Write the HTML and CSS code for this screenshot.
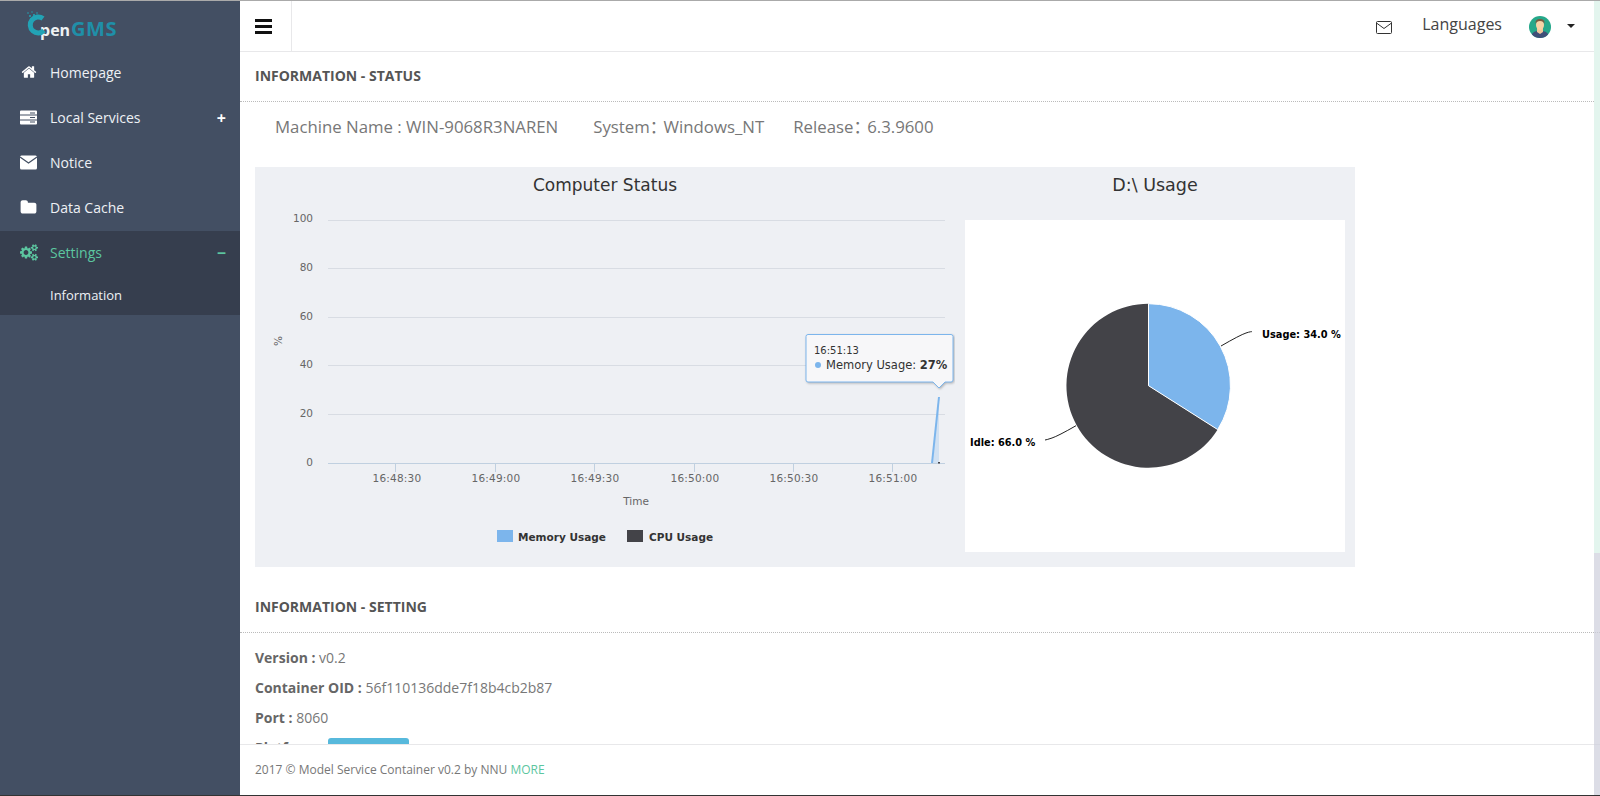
FILE: index.html
```html
<!DOCTYPE html>
<html lang="en">
<head>
  <meta charset="UTF-8">
  <title>OpenGMS - Information</title>
  <link rel="stylesheet" href="styles.css">
</head>
<body>
  <aside class="sidebar">
    <div class="logo">
      <svg class="logo-o" viewBox="0 0 26 30" width="26" height="30">
        <path d="M17 8.500A8 8 0 1 0 18 20.500" fill="none" stroke="#22a3b5" stroke-width="5"/>
        <circle cx="2" cy="3" r=".8" fill="#22a3b5"/>
        <circle cx="6" cy="2" r=".7" fill="#22a3b5"/>
        <circle cx="4" cy="6" r="1" fill="#22a3b5"/>
        <circle cx="8" cy="5" r="1.100" fill="#22a3b5"/>
        <circle cx="11" cy="3" r=".8" fill="#22a3b5"/>
      </svg>
      <span class="logo-pen">pen</span><span class="logo-gms">GMS</span>
    </div>
    <nav class="menu">
      <a class="menu-item">
        <svg class="menu-icon icon-home" viewBox="0 0 1664 1792"><path d="M1408 992v480q0 26-19 45t-45 19h-384v-384h-256v384h-384q-26 0-45-19t-19-45v-480q0-1 .5-3t.5-3l575-474 575 474q1 2 1 6zm223-69l-62 74q-8 9-21 11h-3q-13 0-21-7l-692-577-692 577q-12 8-24 7-13-2-21-11l-62-74q-8-10-7-23.500t11-21.500l719-599q32-26 76-26t76 26l244 204v-195q0-14 9-23t23-9h192q14 0 23 9t9 23v408l219 182q10 8 11 21.500t-7 23.500z"/></svg>
        Homepage
      </a>
      <a class="menu-item">
        <svg class="menu-icon" viewBox="0 0 17 14">
          <path d="M0 1q0-1 1-1h15q1 0 1 1v3H0zM0 5h17v4H0zM0 10h17v3q0 1-1 1H1q-1 0-1-1z"/>
          <path class="slot" d="M10 2h5v1h-5zM10 6.500h5v1h-5zM10 11h5v1h-5z"/>
        </svg>
        Local Services
        <span class="menu-toggle">+</span>
      </a>
      <a class="menu-item">
        <svg class="menu-icon" viewBox="0 0 17 14">
          <rect width="17" height="14" rx="1.500"/>
          <path class="groove" d="M0 1.500l8.500 6 8.500-6"/>
        </svg>
        Notice
      </a>
      <a class="menu-item">
        <svg class="menu-icon" viewBox="0 0 1664 1792"><path d="M1664 608v704q0 92-66 158t-158 66h-1216q-92 0-158-66t-66-158v-960q0-92 66-158t158-66h320q92 0 158 66t66 158v32h672q92 0 158 66t66 158z"/></svg>
        Data Cache
      </a>
      <div class="menu-group">
        <a class="menu-item active">
          <svg class="menu-icon" viewBox="0 0 1920 1792"><path d="M896 896q0-106-75-181t-181-75-181 75-75 181 75 181 181 75 181-75 75-181zm768 512q0-52-38-90t-90-38-90 38-38 90q0 53 37.500 90.500t90.500 37.500 90.500-37.500 37.500-90.500zm0-1024q0-52-38-90t-90-38-90 38-38 90q0 53 37.500 90.500t90.500 37.500 90.500-37.500 37.500-90.500zm-384 421v185q0 10-7 19.500t-16 10.500l-155 24q-11 35-32 76 34 48 90 115 7 11 7 20 0 12-7 19-23 30-82.500 89.500t-78.500 59.500q-11 0-21-7l-115-90q-37 19-77 31-11 108-23 155-7 24-30 24h-186q-11 0-20-7.500t-10-17.500l-23-153q-34-10-75-31l-118 89q-7 7-20 7-11 0-21-8-144-133-144-160 0-9 7-19 10-14 41-53t47-61q-23-44-35-82l-152-24q-10-1-17-9.500t-7-19.500v-185q0-10 7-19.500t16-10.500l155-24q11-35 32-76-34-48-90-115-7-11-7-20 0-12 7-20 22-30 82-89t79-59q11 0 21 7l115 90q34-18 77-32 11-108 23-154 7-24 30-24h186q11 0 20 7.500t10 17.500l23 153q34 10 75 31l118-89q8-7 20-7 11 0 21 8 144 133 144 160 0 8-7 19-12 16-42 54t-45 60q23 48 34 82l152 23q10 2 17 10.500t7 19.500zm640 533v140q0 16-149 31-12 27-30 52 51 113 51 138 0 4-4 7-122 71-124 71-8 0-46-47t-52-68q-20 2-30 2t-30-2q-14 21-52 68t-46 47q-2 0-124-71-4-3-4-7 0-25 51-138-18-25-30-52-149-15-149-31v-140q0-16 149-31 13-29 30-52-51-113-51-138 0-4 4-7 4-2 35-20t59-34 30-16q8 0 46 46.500t52 67.500q20-2 30-2t30 2q51-71 92-112l6-2q4 0 124 70 4 3 4 7 0 25-51 138 17 23 30 52 149 15 149 31zm0-1024v140q0 16-149 31-12 27-30 52 51 113 51 138 0 4-4 7-122 71-124 71-8 0-46-47t-52-68q-20 2-30 2t-30-2q-14 21-52 68t-46 47q-2 0-124-71-4-3-4-7 0-25 51-138-18-25-30-52-149-15-149-31v-140q0-16 149-31 13-29 30-52-51-113-51-138 0-4 4-7 4-2 35-20t59-34 30-16q8 0 46 46.500t52 67.500q20-2 30-2t30 2q51-71 92-112l6-2q4 0 124 70 4 3 4 7 0 25-51 138 17 23 30 52 149 15 149 31z"/></svg>
          Settings
          <span class="menu-toggle">−</span>
        </a>
        <a class="submenu-item">Information</a>
      </div>
    </nav>
  </aside>

  <div class="main">
    <header class="topbar">
      <div class="burger"><span></span><span></span><span></span></div>
      <div class="topbar-right">
        <svg class="top-mail" viewBox="0 0 16 13" width="16" height="13">
          <rect x=".5" y=".5" width="15" height="12" rx="1"/>
          <path d="M.5 2l7.500 5.500L15.500 2"/>
        </svg>
        <span class="languages">Languages</span>
        <svg class="avatar" viewBox="0 0 22 22" width="22" height="22">
          <clipPath id="avatarClip"><circle cx="11" cy="11" r="11"/></clipPath>
          <g clip-path="url(#avatarClip)">
            <rect width="22" height="22" fill="#25a88a"/>
            <path d="M2 22q0-6 6-7h6q6 1 6 7z" fill="#3f4f78"/>
            <path d="M8 12h6v4l-3 2-3-2z" fill="#f1c89a"/>
            <ellipse cx="11" cy="9" rx="4" ry="5" fill="#f6d2a6"/>
            <path d="M6.500 8q-.5-5 4.500-5t4.500 5q-1-3-4.500-3t-4.500 3z" fill="#7a5a40"/>
          </g>
        </svg>
        <span class="caret"></span>
      </div>
    </header>

    <main class="content">
      <h3 class="section-title">INFORMATION - STATUS</h3>
      <div class="machine">
        <span>Machine Name : WIN-9068R3NAREN</span>
        <span class="machine-system">System<span class="colon">：</span>Windows_NT</span>
        <span class="machine-release">Release<span class="colon">：</span>6.3.9600</span>
      </div>

      <div class="charts">
        <svg class="line-chart" viewBox="255 167 700 400" width="700" height="400">
          <text class="chart-title" x="605" y="191">Computer Status</text>

          <g class="grid">
            <path d="M328 220.500H945M328 268.500H945M328 317.500H945M328 365.500H945M328 414.500H945"/>
          </g>
          <path class="baseline" d="M328 463.500H945M395.500 463V472M495.500 463V472M594.500 463V472M694.500 463V472M793.500 463V472M892.500 463V472"/>

          <g class="y-labels">
            <text x="313" y="222">100</text>
            <text x="313" y="271">80</text>
            <text x="313" y="320">60</text>
            <text x="313" y="368">40</text>
            <text x="313" y="417">20</text>
            <text x="313" y="466">0</text>
          </g>
          <text class="axis-name" transform="translate(282 341) rotate(-90)">%</text>

          <g class="x-labels">
            <text x="397" y="482">16:48:30</text>
            <text x="496" y="482">16:49:00</text>
            <text x="595" y="482">16:49:30</text>
            <text x="695" y="482">16:50:00</text>
            <text x="794" y="482">16:50:30</text>
            <text x="893" y="482">16:51:00</text>
          </g>
          <text class="axis-name" x="636" y="505">Time</text>

          <path class="series-area" d="M932 463L939 397V463z"/>
          <path class="series-line" d="M932 463L939 397"/>
          <rect x="938" y="462" width="2" height="1.500" fill="#444349"/>

          <rect class="swatch-memory" x="497" y="530" width="16" height="12"/>
          <text class="legend" x="518" y="541">Memory Usage</text>
          <rect class="swatch-cpu" x="627" y="530" width="16" height="12"/>
          <text class="legend" x="649" y="541">CPU Usage</text>

          <path class="tip-box" d="M808 334.500H951a2 2 0 0 1 2 2V380a2 2 0 0 1-2 2H945L939 388L933 382H808a2 2 0 0 1-2-2V336.500a2 2 0 0 1 2-2z"/>
          <text class="tip-time" x="814" y="354">16:51:13</text>
          <circle cx="818" cy="365" r="3" fill="#7cb5ec"/>
          <text class="tip-text" x="826" y="369">Memory Usage: <tspan class="tip-value">27%</tspan></text>
        </svg>

        <div class="pie-col">
          <div class="pie-title">D:\ Usage</div>
          <svg class="pie-chart" viewBox="965 220 380 332" width="380" height="332">
            <path class="slice-idle" d="M1148.500 385.700L1217.700 429.600A82 82 0 1 1 1148.500 303.700z"/>
            <path class="slice-usage" d="M1148.500 385.700V303.700A82 82 0 0 1 1217.700 429.600z"/>
            <path class="leader" d="M1221 346Q1240 335 1246 333T1252 332"/>
            <path class="leader" d="M1076 425.700Q1058 436 1052 438T1045 440"/>
            <text class="pie-label" x="1262" y="338">Usage: 34.0 %</text>
            <text class="pie-label" x="970" y="446">Idle: 66.0 %</text>
          </svg>
        </div>
      </div>

      <h3 class="section-title setting-title">INFORMATION - SETTING</h3>
      <div class="settings">
        <div class="setting-row"><b>Version :</b> v0.2</div>
        <div class="setting-row"><b>Container OID :</b> 56f110136dde7f18b4cb2b87</div>
        <div class="setting-row"><b>Port :</b> 8060</div>
        <div class="setting-row"><b>Platform :</b> <span class="badge">Windows</span></div>
      </div>
    </main>

    <footer class="footer">2017 © Model Service Container v0.2 by NNU <a class="more">MORE</a></footer>
  </div>

  <div class="scrollbar"><div class="scroll-thumb"></div></div>
</body>
</html>
```

FILE: styles.css
```css
* {
  box-sizing: border-box;
}
html, body {
  margin: 0;
  height: 796px;
  overflow: hidden;
}
body {
  display: flex;
  position: relative;
  font-family: "Open Sans", "Noto Sans CJK SC", sans-serif;
  font-size: 14px;
  color: #777;
  background: white;
  border-top: 1px solid #aaa;
  border-bottom: 1px solid #333;
}

/* sidebar */
.sidebar {
  width: 240px;
  flex-shrink: 0;
  background: #434f63;
}
.logo {
  height: 50px;
  display: flex;
  align-items: baseline;
  position: relative;
  padding: 18px 0 0 40px;
  line-height: 1;
}
.logo-o {
  position: absolute;
  left: 26px;
  top: 9px;
}
.logo-pen {
  color: #eef2f4;
  font-size: 16px;
  font-weight: 700;
}
.logo-gms {
  margin-left: 1px;
  color: #1f8fa8;
  font-size: 20px;
  font-weight: 700;
  letter-spacing: .5px;
}
.menu-item {
  height: 45px;
  display: flex;
  align-items: center;
  padding: 0 14px 2px 50px;
  position: relative;
  color: #eef1f5;
  font-size: 14px;
}
.menu-icon {
  position: absolute;
  left: 20px;
  top: 13px;
  width: 17px;
  height: 17px;
  fill: #fff;
}
.icon-home {
  left: 21px;
  width: 16px;
  height: 16px;
}
.menu-icon .slot {
  fill: #434f63;
}
.menu-icon .groove {
  fill: none;
  stroke: #434f63;
  stroke-width: 1.300;
}
.menu-toggle {
  margin-left: auto;
  font-size: 16px;
  font-weight: 700;
  color: #fff;
}
.menu-group {
  background: #363e4e;
  height: 84px;
}
.menu-item.active,
.menu-item.active .menu-toggle {
  color: #5cc6a0;
}
.menu-item.active .menu-icon {
  fill: #5cc6a0;
  width: 18px;
}
.submenu-item {
  display: block;
  padding: 6px 0 0 50px;
  line-height: 27px;
  font-size: 13px;
  color: #eef1f5;
}

/* top bar */
.main {
  flex: 1;
  min-width: 0;
  display: flex;
  flex-direction: column;
}
.topbar {
  height: 51px;
  flex-shrink: 0;
  display: flex;
  justify-content: space-between;
  border-bottom: 1px solid #e8e8ea;
}
.burger {
  width: 52px;
  border-right: 1px solid #e8e8ea;
  padding: 18px 0 0 15px;
}
.burger span {
  display: block;
  width: 17px;
  height: 3px;
  margin-bottom: 3px;
  background: #111;
}
.topbar-right {
  display: flex;
  align-items: center;
  padding-right: 25px;
}
.top-mail {
  fill: none;
  stroke: #333;
  stroke-width: 1;
  margin: 2px 30px 0 0;
}
.languages {
  font-size: 16px;
  color: #444;
  margin: -4px 27px 0 0;
}
.avatar {
  margin: 1px 16px 0 0;
}
.caret {
  border: 4px solid transparent;
  border-top-color: #222;
  border-bottom: 0;
}

/* content */
.content {
  flex: 1;
  min-height: 0;
  overflow: hidden;
}
.section-title {
  margin: 0;
  height: 50px;
  line-height: 47px;
  padding-left: 15px;
  font-size: 14px;
  font-weight: 700;
  color: #555;
  border-bottom: 1px dotted #bbb;
}
.setting-title {
  height: 51px;
  margin-top: 15px;
  line-height: 49px;
}
.machine {
  height: 50px;
  display: flex;
  align-items: center;
  padding: 0 0 2px 35px;
  font-size: 16.800px;
  color: #777;
}
.machine-system {
  margin-left: 35px;
}
.machine-release {
  margin-left: 29px;
}
.colon {
  margin-right: -3px;
}
.charts {
  margin: 15px 0 0 15px;
  width: 1100px;
  height: 400px;
  display: flex;
  background: #eef0f4;
}
.chart-title, .pie-title {
  font-family: "DejaVu Sans", sans-serif;
  font-size: 17.500px;
  fill: #333;
  color: #333;
}
.chart-title {
  font-size: 17px;
  text-anchor: middle;
}
.line-chart {
  flex-shrink: 0;
  width: 700px;
}
.grid {
  stroke: #d8dce3;
  stroke-width: 1;
}
.baseline {
  fill: none;
  stroke: #c0d0e0;
  stroke-width: 1;
}
.y-labels text, .x-labels text, .axis-name, .tip-time, .tip-text {
  font-family: "DejaVu Sans", sans-serif;
  font-size: 10.500px;
  fill: #666;
}
.x-labels text {
  letter-spacing: .2px;
}
.y-labels text {
  text-anchor: end;
}
.x-labels text, .axis-name {
  text-anchor: middle;
}
.series-area {
  fill: #7cb5ec;
  opacity: .25;
}
.series-line {
  fill: none;
  stroke: #7cb5ec;
  stroke-width: 2;
}
.swatch-memory {
  fill: #7cb5ec;
}
.swatch-cpu {
  fill: #434348;
}
.legend {
  font-family: "DejaVu Sans", sans-serif;
  font-size: 10.500px;
  font-weight: 700;
  fill: #333;
}
.tip-box {
  fill: #f7f7f9;
  stroke: #7cb5ec;
  stroke-width: 1;
  filter: drop-shadow(1px 1px 1px rgba(0,0,0,.25));
}
.tip-time {
  font-size: 10px;
  fill: #333;
}
.tip-text {
  font-size: 11.500px;
  fill: #333;
}
.tip-value {
  font-weight: 700;
}
.pie-col {
  width: 380px;
  margin-left: 10px;
}
.pie-title {
  height: 53px;
  line-height: 37px;
  text-align: center;
}
.pie-chart {
  display: block;
  background: white;
}
.slice-idle {
  fill: #434348;
}
.slice-usage {
  fill: #7cb5ec;
  stroke: white;
  stroke-width: 1;
}
.leader {
  fill: none;
  stroke: #222;
  stroke-width: 1;
}
.pie-label {
  font-family: "DejaVu Sans", sans-serif;
  font-size: 9.800px;
  font-weight: 700;
  fill: #000;
}
.settings {
  padding: 10px 0 0 15px;
}
.setting-row {
  height: 30px;
  line-height: 30px;
}
.setting-row b {
  color: #666;
}
.badge {
  display: inline-block;
  width: 81px;
  height: 24px;
  line-height: 24px;
  text-align: center;
  color: white;
  background: #57b9dc;
  border-radius: 3px;
  vertical-align: top;
  margin-top: 5px;
}
.footer {
  height: 51px;
  flex-shrink: 0;
  line-height: 49px;
  padding-left: 15px;
  border-top: 1px solid #e8e8ea;
  font-size: 12px;
  color: #777;
  background: white;
}
.more {
  color: #5cc6a0;
}

/* thin scrollbar over the page edge */
.scrollbar {
  position: absolute;
  top: 0;
  right: 0;
  bottom: 0;
  width: 6px;
  background: rgba(205,207,220,.7);
}
.scroll-thumb {
  height: 552px;
  background: #e3f5ee;
}
```
